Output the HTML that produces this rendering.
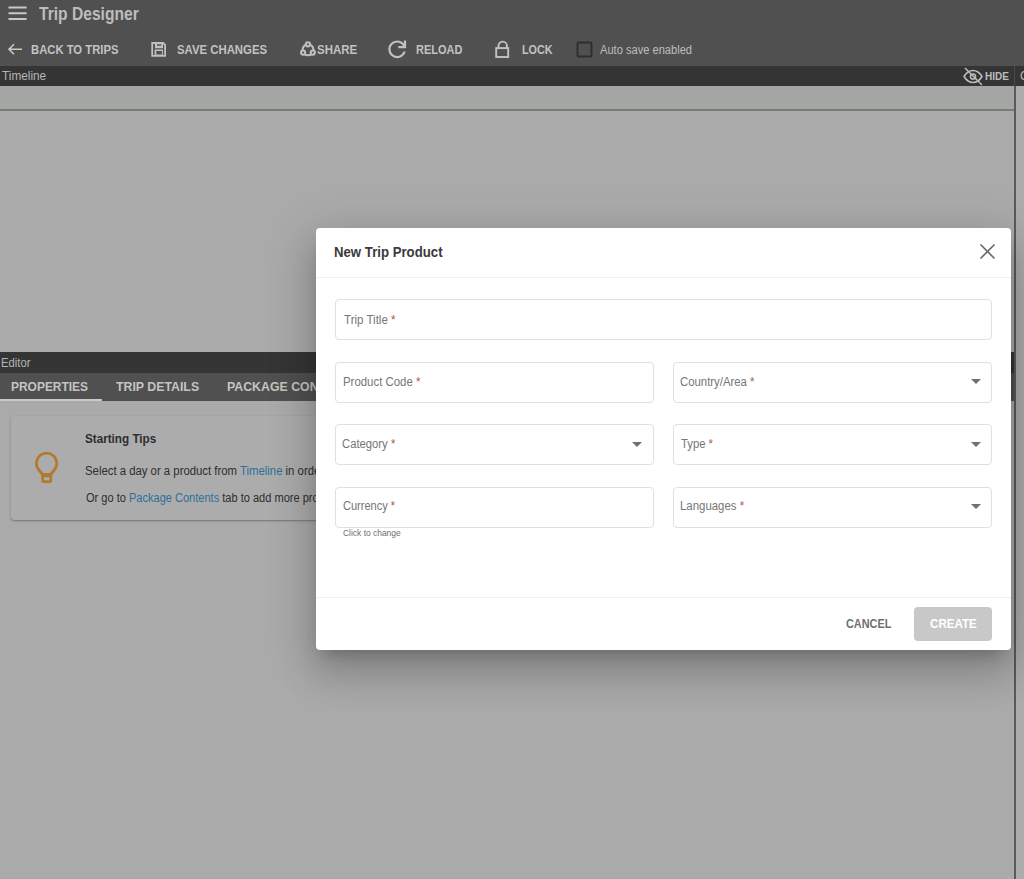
<!DOCTYPE html>
<html><head><meta charset="utf-8">
<style>
*{margin:0;padding:0;box-sizing:border-box}
html,body{width:1024px;height:879px;overflow:hidden;background:#aaaaaa;font-family:"Liberation Sans",sans-serif;position:relative}
.a{position:absolute}
.t{position:absolute;line-height:1;white-space:nowrap;transform-origin:0 0}
.fld{position:absolute;border:1px solid #e0e0e0;border-radius:4px;background:#fff}
.arr{position:absolute;width:0;height:0;border-left:5px solid transparent;border-right:5px solid transparent;border-top:5px solid #707070}
</style></head><body>
<!-- app bar -->
<div class="a" style="left:0;top:0;width:1024px;height:66px;background:#505050"></div>
<!-- timeline bar -->
<div class="a" style="left:0;top:66px;width:1024px;height:20px;background:#353535"></div>
<div class="a" style="left:0;top:86px;width:1014px;height:23px;background:#a3a6a3"></div>
<div class="a" style="left:0;top:109px;width:1014px;height:2px;background:#7a7a7a"></div>
<div class="a" style="left:1016px;top:86px;width:8px;height:793px;background:#acacac"></div>
<div class="a" style="left:1013.5px;top:86px;width:2px;height:793px;background:#5a5a5a"></div>
<div class="a" style="left:1014px;top:66px;width:1px;height:20px;background:#4a4a4a"></div>
<!-- editor -->
<div class="a" style="left:0;top:352px;width:1014px;height:21px;background:#353535"></div>
<div class="a" style="left:0;top:373px;width:1014px;height:28px;background:#505050"></div>
<div class="a" style="left:0;top:399px;width:102px;height:2px;background:#c8c8c8"></div>
<!-- card -->
<div class="a" style="left:11px;top:416px;width:600px;height:104px;background:#acacac;border-radius:4px;box-shadow:0 1px 3px rgba(0,0,0,0.2),0 1px 1px rgba(0,0,0,0.14)"></div>
<!-- icons -->
<svg class="a" style="left:0;top:0" width="1024" height="879" viewBox="0 0 1024 879">
 <g fill="none" stroke="#c8c8c8">
  <path d="M8.5 7.5H26.6M8.5 13.2H26.6M8.5 18.9H26.6" stroke-width="2"/>
  <path d="M9 49.2H22M14 44.3L9 49.2L14 54.2" stroke-width="1.6"/>
 </g>
 <g fill="none" stroke="#c2c2c2" stroke-width="1.6">
  <path d="M498.45 48V45.8A4.22 4.22 0 0 1 506.9 45.8V48" stroke-width="1.9"/>
  <rect x="496.2" y="48.1" width="12" height="8.9" stroke-width="1.9"/>
 </g>
 <path transform="translate(383.85 35.95) scale(0.0278) translate(0 960)" fill="#c2c2c2" d="M480-160q-134 0-227-93t-93-227q0-134 93-227t227-93q69 0 132 28.5T720-690v-110h80v280H520v-80h168q-32-56-87.5-88T480-720q-100 0-170 70t-70 170q0 100 70 170t170 70q77 0 139-44t87-116h84q-28 106-114 173t-196 67Z"/>
 <g fill="#c0c0c0" fill-rule="evenodd">
  <path d="M151.3 42.1H163.6L166 44.5V56.8H151.3ZM153.1 43.9V55H164.2V45.3L162.8 43.9Z"/>
  <path d="M155 43.9H163V48.2H155ZM157 44.3V45.8H161.3V44.3Z"/>
  <path d="M154.6 49.6H162.9V55H154.6ZM156.3 51V54.6H161.9V51Z"/>
 </g>
 <g>
  <circle cx="308" cy="49.8" r="5.5" fill="none" stroke="#c0c0c0" stroke-width="2.1"/>
  <circle cx="307.9" cy="44.3" r="3.1" fill="#c0c0c0"/>
  <circle cx="303.1" cy="52.6" r="3.1" fill="#c0c0c0"/>
  <circle cx="312.8" cy="52.6" r="3.1" fill="#c0c0c0"/>
  <circle cx="307.9" cy="44.3" r="1.05" fill="#505050"/>
  <circle cx="303.1" cy="52.6" r="1.05" fill="#505050"/>
  <circle cx="312.8" cy="52.6" r="1.05" fill="#505050"/>
 </g>
 <rect x="577.5" y="42.5" width="14" height="14" rx="1.2" fill="none" stroke="#2e2e2e" stroke-width="2"/>
 <g fill="none" stroke="#bdbdbd" stroke-width="1.5">
  <path d="M964 76.5C967 71.5 971 70.5 973 70.5C975 70.5 979 71.5 982 76.5C979 81.5 975 82.5 973 82.5C971 82.5 967 81.5 964 76.5Z"/>
  <circle cx="973" cy="76.5" r="2.6"/>
  <path d="M965 68L982 85"/>
 </g>
 <g fill="none" stroke="#b27a2e" stroke-width="2.8" stroke-linejoin="round">
  <path d="M42.6 474.5L38.5 469.5A10.2 10.2 0 1 1 54.7 469.5L50.6 474.5Z"/>
  <path d="M42.6 475.8H50.8V480.2A1.4 1.4 0 0 1 49.4 481.6H44A1.4 1.4 0 0 1 42.6 480.2Z"/>
 </g>
</svg>
<div id="t0" class="t" style="left:38.68px;top:4.76px;font-size:18px;font-weight:bold;color:#bdbdbd;transform:scaleX(0.8668);">Trip Designer</div>
<div id="t1" class="t" style="left:31.02px;top:43.84px;font-size:12px;font-weight:bold;color:#c2c2c2;transform:scaleX(0.9392);">BACK TO TRIPS</div>
<div id="t2" class="t" style="left:177.42px;top:43.84px;font-size:12px;font-weight:bold;color:#c2c2c2;transform:scaleX(0.9468);">SAVE CHANGES</div>
<div id="t3" class="t" style="left:317.02px;top:43.84px;font-size:12px;font-weight:bold;color:#c2c2c2;transform:scaleX(0.9539);">SHARE</div>
<div id="t4" class="t" style="left:416.25px;top:43.84px;font-size:12px;font-weight:bold;color:#c2c2c2;transform:scaleX(0.9143);">RELOAD</div>
<div id="t5" class="t" style="left:522.17px;top:43.84px;font-size:12px;font-weight:bold;color:#c2c2c2;transform:scaleX(0.9018);">LOCK</div>
<div id="t6" class="t" style="left:600.00px;top:43.84px;font-size:12px;font-weight:normal;color:#bdbdbd;transform:scaleX(0.9253);">Auto save enabled</div>
<div id="t7" class="t" style="left:2.00px;top:69.74px;font-size:12px;font-weight:normal;color:#b5b5b5;transform:scaleX(0.9825);">Timeline</div>
<div id="t8" class="t" style="left:985.09px;top:70.59px;font-size:11px;font-weight:bold;color:#bdbdbd;transform:scaleX(0.9081);">HIDE</div>
<div id="t9" class="t" style="left:1020.00px;top:69.84px;font-size:12px;font-weight:normal;color:#b5b5b5;transform:scaleX(0.9825);">C</div>
<div id="t10" class="t" style="left:0.85px;top:356.74px;font-size:12px;font-weight:normal;color:#b5b5b5;transform:scaleX(0.9403);">Editor</div>
<div id="t11" class="t" style="left:10.90px;top:380.25px;font-size:13px;font-weight:bold;color:#c4c4c4;transform:scaleX(0.9195);">PROPERTIES</div>
<div id="t12" class="t" style="left:116.22px;top:380.25px;font-size:13px;font-weight:bold;color:#c4c4c4;transform:scaleX(0.9483);">TRIP DETAILS</div>
<div id="t13" class="t" style="left:226.60px;top:380.25px;font-size:13px;font-weight:bold;color:#c4c4c4;transform:scaleX(0.9483);">PACKAGE CONTENTS</div>
<div id="t14" class="t" style="left:85.21px;top:432.84px;font-size:12px;font-weight:bold;color:#2e2e2e;transform:scaleX(0.9737);">Starting Tips</div>
<div id="t15" class="t" style="left:85.23px;top:464.84px;font-size:12px;font-weight:normal;color:#2e2e2e;transform:scaleX(0.9457);">Select a day or a product from <span style="color:#2f6f9a">Timeline</span> in order to edit its properties</div>
<div id="t16" class="t" style="left:86.25px;top:491.64px;font-size:12px;font-weight:normal;color:#2e2e2e;transform:scaleX(0.9202);">Or go to <span style="color:#2f6f9a">Package Contents</span> tab to add more products</div>
<!-- modal -->
<div class="a" style="left:316px;top:228px;width:695px;height:422px;background:#fff;border-radius:4px;box-shadow:0px 11px 15px -7px rgba(0,0,0,0.2),0px 24px 38px 3px rgba(0,0,0,0.14),0px 9px 46px 8px rgba(0,0,0,0.12);z-index:10">
</div>

<div class="a" style="left:316px;top:276.5px;width:695px;height:1px;background:#efefef;z-index:11"></div>
<div class="a" style="left:316px;top:596.5px;width:695px;height:1px;background:#efefef;z-index:11"></div>
<div class="fld" style="left:335px;top:299px;width:657px;height:41px;z-index:11"></div>
<div class="fld" style="left:335px;top:361.5px;width:319px;height:41.5px;z-index:11"></div>
<div class="fld" style="left:673px;top:361.5px;width:319px;height:41.5px;z-index:11"></div>
<div class="fld" style="left:335px;top:424px;width:319px;height:41px;z-index:11"></div>
<div class="fld" style="left:673px;top:424px;width:319px;height:41px;z-index:11"></div>
<div class="fld" style="left:335px;top:486.5px;width:319px;height:41.5px;z-index:11"></div>
<div class="fld" style="left:673px;top:486.5px;width:319px;height:41.5px;z-index:11"></div>
<div class="arr" style="left:970.5px;top:379px;z-index:12"></div>
<div class="arr" style="left:632px;top:441.5px;z-index:12"></div>
<div class="arr" style="left:970.5px;top:441.5px;z-index:12"></div>
<div class="arr" style="left:970.5px;top:504px;z-index:12"></div>
<div class="a" style="left:914px;top:607px;width:78px;height:33.5px;background:#c8c8c8;border-radius:4px;z-index:11"></div>
<svg class="a" style="left:0;top:0;z-index:12" width="1024" height="879" viewBox="0 0 1024 879">
 <path d="M980.5 244.5L994.5 258.5M994.5 244.5L980.5 258.5" stroke="#666" stroke-width="1.6" fill="none"/>
</svg>
<div id="t17" class="t" style="z-index:13;left:334.42px;top:245.15px;font-size:14px;font-weight:bold;color:#3a3a3a;transform:scaleX(0.9427);">New Trip Product</div>
<div id="t18" class="t" style="z-index:13;left:344.00px;top:313.64px;font-size:12px;font-weight:normal;color:#767676;transform:scaleX(0.9623);">Trip Title<span style="color:#a8573a"> *</span></div>
<div id="t19" class="t" style="z-index:13;left:343.25px;top:375.54px;font-size:12px;font-weight:normal;color:#767676;transform:scaleX(0.9513);">Product Code<span style="color:#a8573a"> *</span></div>
<div id="t20" class="t" style="z-index:13;left:680.42px;top:375.54px;font-size:12px;font-weight:normal;color:#767676;transform:scaleX(0.9462);">Country/Area<span style="color:#a8573a"> *</span></div>
<div id="t21" class="t" style="z-index:13;left:342.03px;top:438.44px;font-size:12px;font-weight:normal;color:#767676;transform:scaleX(0.9393);">Category<span style="color:#a8573a"> *</span></div>
<div id="t22" class="t" style="z-index:13;left:681.42px;top:438.44px;font-size:12px;font-weight:normal;color:#767676;transform:scaleX(0.9394);">Type<span style="color:#a8573a"> *</span></div>
<div id="t23" class="t" style="z-index:13;left:343.04px;top:500.44px;font-size:12px;font-weight:normal;color:#767676;transform:scaleX(0.9179);">Currency<span style="color:#a8573a"> *</span></div>
<div id="t24" class="t" style="z-index:13;left:680.42px;top:500.44px;font-size:12px;font-weight:normal;color:#767676;transform:scaleX(0.9509);">Languages<span style="color:#a8573a"> *</span></div>
<div id="t25" class="t" style="z-index:13;left:343.03px;top:528.98px;font-size:9px;font-weight:normal;color:#6e6e6e;transform:scaleX(0.9378);">Click to change</div>
<div id="t26" class="t" style="z-index:13;left:846.22px;top:617.00px;font-size:13px;font-weight:bold;color:#6f6f6f;transform:scaleX(0.8372);">CANCEL</div>
<div id="t27" class="t" style="z-index:13;left:930.22px;top:616.70px;font-size:13px;font-weight:bold;color:#ffffff;transform:scaleX(0.8924);">CREATE</div>
</body></html>
